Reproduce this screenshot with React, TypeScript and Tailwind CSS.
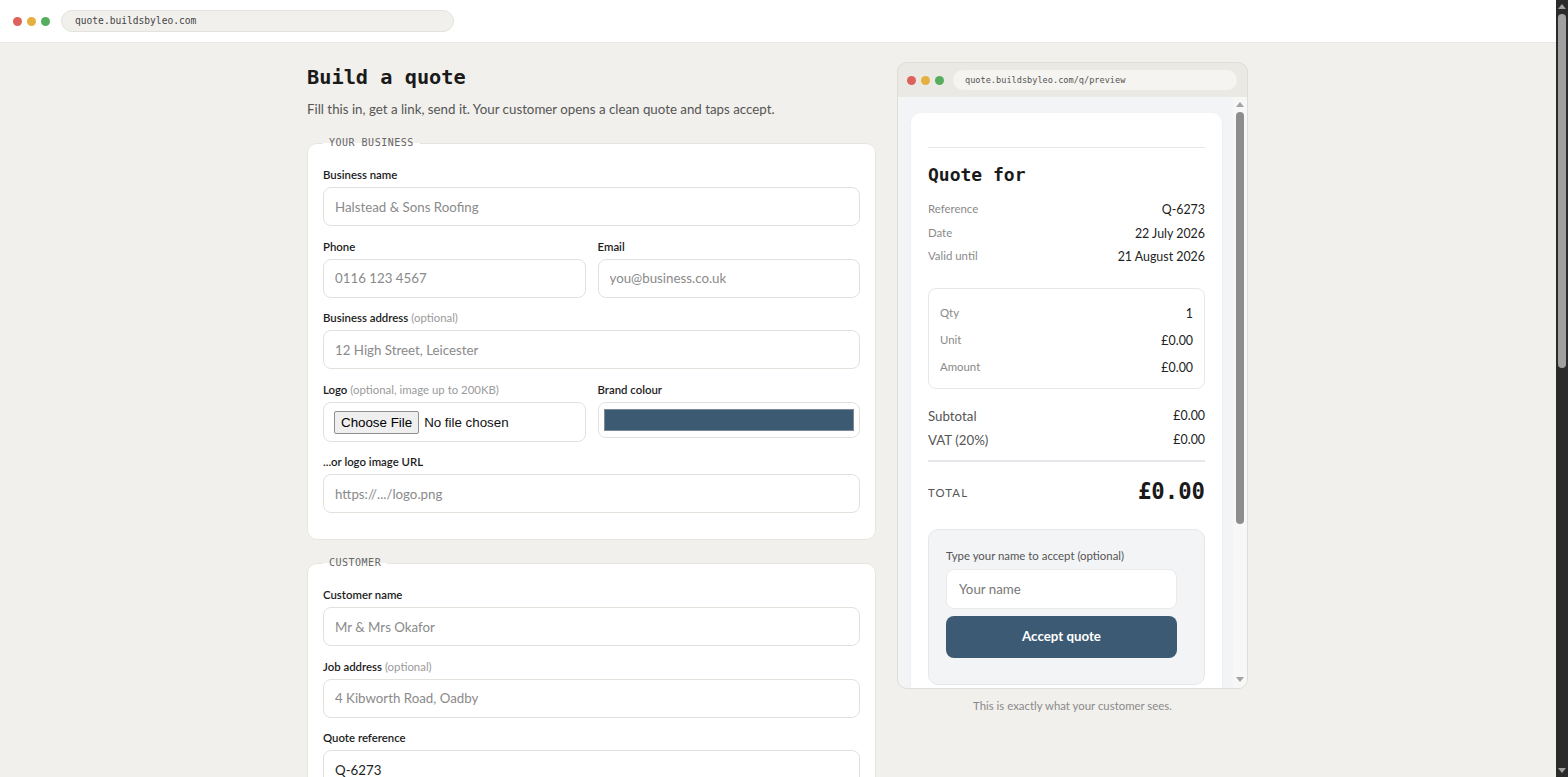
import React from "react";

function Label({ children, optional }: { children: React.ReactNode; optional?: string }) {
  return (
    <label className="block text-[11.4px] leading-[16px] font-semibold text-[#1c1c1c] mb-[4px]">
      {children}
      {optional && <span className="font-normal text-[#9a9a9a]"> {optional}</span>}
    </label>
  );
}

function TextInput({ placeholder, value }: { placeholder?: string; value?: string }) {
  return (
    <input
      className="block w-full h-[39px] rounded-[8px] border border-[#e3e1db] bg-white px-[11px] text-[13.3px] text-[#222] placeholder:text-[#8a8a8a] outline-none"
      placeholder={placeholder}
      defaultValue={value}
    />
  );
}

function Field({ label, optional, placeholder, value }: { label: string; optional?: string; placeholder?: string; value?: string }) {
  return (
    <div>
      <Label optional={optional}>{label}</Label>
      <TextInput placeholder={placeholder} value={value} />
    </div>
  );
}

function Card({ legend, children, className = "" }: { legend: string; children: React.ReactNode; className?: string }) {
  return (
    <fieldset className={`rounded-[10px] border border-[#e6e4de] bg-white px-[15px] pt-[17px] pb-[26px] ${className}`}>
      <legend className="px-[6px] font-['DejaVu_Sans_Mono',monospace] text-[10px] leading-[14px] tracking-[0.5px] text-[#666]">{legend}</legend>
      <div className="flex flex-col gap-[12.5px]">{children}</div>
    </fieldset>
  );
}

function Dots() {
  return (
    <div className="flex items-center gap-[5px]">
      <span className="w-[9px] h-[9px] rounded-full bg-[#dc625b]" />
      <span className="w-[9px] h-[9px] rounded-full bg-[#e6b03f]" />
      <span className="w-[9px] h-[9px] rounded-full bg-[#56ad5d]" />
    </div>
  );
}

function Arrow({ down, color }: { down?: boolean; color: string }) {
  return (
    <svg width="8" height="5" viewBox="0 0 8 5" className="shrink-0">
      <path d={down ? "M0 0 H8 L4 5 Z" : "M0 5 H8 L4 0 Z"} fill={color} />
    </svg>
  );
}

function MetaRow({ label, value }: { label: string; value: string }) {
  return (
    <div className="flex justify-between items-center leading-[20px]">
      <span className="text-[11.4px] text-[#8a8a8a] -mt-[2px]">{label}</span>
      <span className="text-[12.4px] text-[#222]">{value}</span>
    </div>
  );
}

export default function App() {
  return (
    <div className="flex h-[777px] bg-[#f1f0ec] font-['Lato',sans-serif] text-[#1f1f1f]">
      <div className="flex-1 min-w-0 h-full overflow-y-auto [scrollbar-width:none]">
        {/* top bar */}
        <div className="h-[43px] bg-white border-b border-[#e9e7e1] flex items-center pl-[13px]">
          <Dots />
          <div className="ml-[11px] w-[393px] h-[22px] rounded-full bg-[#f1f0ec] border border-[#e4e2dc] flex items-center pl-[13px] font-['DejaVu_Sans_Mono',monospace] text-[9.6px] text-[#444]">
            quote.buildsbyleo.com
          </div>
        </div>

        <main className="w-[942px] mx-auto pt-[20px] pb-[90px] grid grid-cols-[569px_351px] gap-x-[21px] items-start">
          {/* left column */}
          <div>
            <h1 className="font-['DejaVu_Sans_Mono',monospace] font-bold text-[20.3px] leading-[28px] text-[#1a1a1a]">Build a quote</h1>
            <p className="mt-[8px] text-[13.3px] leading-[20px] text-[#555]">
              Fill this in, get a link, send it. Your customer opens a clean quote and taps accept.
            </p>

            <Card legend="YOUR BUSINESS" className="mt-[17px]">
              <Field label="Business name" placeholder="Halstead & Sons Roofing" />
              <div className="grid grid-cols-2 gap-x-[12px]">
                <Field label="Phone" placeholder="0116 123 4567" />
                <Field label="Email" placeholder="you@business.co.uk" />
              </div>
              <Field label="Business address" optional="(optional)" placeholder="12 High Street, Leicester" />
              <div className="grid grid-cols-2 gap-x-[12px]">
                <div>
                  <Label optional="(optional, image up to 200KB)">Logo</Label>
                  <input
                    type="file"
                    className="block w-full h-[40px] rounded-[8px] border border-[#e3e1db] bg-white px-[10px] py-[8px] font-['Liberation_Sans',Arial,sans-serif] text-[13.33px] text-[#111] file:mr-[5px] file:rounded-[2px] file:border file:border-solid file:border-[#8f8f8f] file:bg-[#efefef] file:px-[6px] file:py-[1px] file:text-[#000] file:font-['Liberation_Sans',Arial,sans-serif] file:text-[13.33px]"
                  />
                </div>
                <div>
                  <Label>Brand colour</Label>
                  <div className="h-[36px] rounded-[8px] border border-[#e3e1db] bg-white px-[5px] py-[6px]">
                    <div className="h-full border border-[#7d8a96] bg-[#3d5a73]" />
                  </div>
                </div>
              </div>
              <Field label="...or logo image URL" placeholder="https://.../logo.png" />
            </Card>

            <Card legend="CUSTOMER" className="mt-[16px]">
              <Field label="Customer name" placeholder="Mr & Mrs Okafor" />
              <Field label="Job address" optional="(optional)" placeholder="4 Kibworth Road, Oadby" />
              <Field label="Quote reference" value="Q-6273" />
              <div className="grid grid-cols-2 gap-x-[12px]">
                <Field label="Quote date" value="22/07/2026" />
                <Field label="Valid for (days)" value="30" />
              </div>
            </Card>

            <Card legend="THE WORK" className="mt-[17px]">
              <div>
                <Label>Description</Label>
                <textarea
                  className="block w-full h-[80px] rounded-[8px] border border-[#e3e1db] bg-white px-[11px] py-[9px] text-[13.3px] placeholder:text-[#8a8a8a] outline-none resize-none"
                  placeholder="Strip and re-felt rear roof slope, replace damaged tiles"
                />
              </div>
              <div className="grid grid-cols-2 gap-x-[12px]">
                <Field label="Quantity" value="1" />
                <Field label="Unit price (£)" placeholder="0.00" />
              </div>
              <label className="flex items-center gap-[8px] text-[12.4px] text-[#333]">
                <input type="checkbox" defaultChecked className="w-[14px] h-[14px]" />
                Add VAT (20%)
              </label>
            </Card>

            <Card legend="NOTES" className="mt-[17px]">
              <div>
                <Label optional="(optional)">Notes for the customer</Label>
                <textarea
                  className="block w-full h-[80px] rounded-[8px] border border-[#e3e1db] bg-white px-[11px] py-[9px] text-[13.3px] placeholder:text-[#8a8a8a] outline-none resize-none"
                  placeholder="Scaffolding included. 50% deposit on acceptance."
                />
              </div>
            </Card>

            <button className="mt-[20px] w-full h-[46px] rounded-[8px] bg-[#1f1f1f] text-white text-[13.3px] font-bold">
              Create quote link
            </button>
          </div>

          {/* right column */}
          <div className="-mt-[1px]">
            <div className="rounded-[10px] border border-[#dfddd7] bg-[#ebe9e4] overflow-hidden">
              <div className="h-[34px] flex items-center pl-[9px] pr-[10px]">
                <Dots />
                <div className="ml-[9px] flex-1 h-[20px] rounded-full bg-[#f5f4f0] flex items-center pl-[12px] font-['DejaVu_Sans_Mono',monospace] text-[8.6px] text-[#555]">
                  quote.buildsbyleo.com/q/preview
                </div>
              </div>
              <div className="h-[591px] flex bg-[#f3f4f6]">
                <div className="flex-1 min-w-0 overflow-hidden pl-[13px] pr-[11px] pt-[16px]">
                  <div className="min-h-[788px] rounded-[10px] bg-white shadow-[0_1px_3px_rgba(0,0,0,0.05)] px-[17px] pt-[34px] pb-[17px]">
                    <div className="border-t border-[#e5e7eb]" />
                    <h2 className="mt-[15px] font-['DejaVu_Sans_Mono',monospace] font-bold text-[18px] leading-[24px] text-[#1a1a1a]">Quote for</h2>
                    <div className="mt-[13px] flex flex-col gap-[3.5px]">
                      <MetaRow label="Reference" value="Q-6273" />
                      <MetaRow label="Date" value="22 July 2026" />
                      <MetaRow label="Valid until" value="21 August 2026" />
                    </div>

                    <div className="mt-[21px] rounded-[8px] border border-[#e5e7eb] px-[11px] pt-[15px] pb-[10px] flex flex-col gap-[7px]">
                      <MetaRow label="Qty" value="1" />
                      <MetaRow label="Unit" value="£0.00" />
                      <MetaRow label="Amount" value="£0.00" />
                    </div>

                    <div className="mt-[17px] flex flex-col gap-[4px]">
                      <div className="flex justify-between items-center leading-[20px]">
                        <span className="text-[13.3px] text-[#555]">Subtotal</span>
                        <span className="text-[12.4px] text-[#222]">£0.00</span>
                      </div>
                      <div className="flex justify-between items-center leading-[20px]">
                        <span className="text-[13.3px] text-[#555]">VAT (20%)</span>
                        <span className="text-[12.4px] text-[#222]">£0.00</span>
                      </div>
                    </div>
                    <div className="mt-[10px] border-t-2 border-[#e5e7eb]" />
                    <div className="mt-[14px] flex justify-between items-center">
                      <span className="text-[11.4px] tracking-[1.1px] text-[#555] mt-[4px]">TOTAL</span>
                      <span className="font-['DejaVu_Sans_Mono',monospace] font-bold text-[22.3px] leading-[30px] text-[#1a1a1a]">£0.00</span>
                    </div>

                    <div className="mt-[23px] rounded-[10px] border border-[#e5e7eb] bg-[#f3f4f6] pl-[17px] pt-[18px] pb-[26px]">
                      <label className="block text-[11.4px] leading-[16px] text-[#555] mb-[5px]">Type your name to accept (optional)</label>
                      <input
                        className="block w-[231px] h-[40px] rounded-[8px] border border-[#eceae6] bg-white px-[12px] text-[13.3px] placeholder:text-[#777] outline-none"
                        placeholder="Your name"
                      />
                      <button className="mt-[7px] w-[231px] h-[42px] rounded-[8px] bg-[#3c5a73] text-white text-[13.3px] font-bold">
                        Accept quote
                      </button>
                    </div>
                  </div>
                </div>
                {/* preview scrollbar */}
                <div className="w-[14px] shrink-0 bg-[#f7f7f7] flex flex-col items-center pt-[5px] pb-[6px]">
                  <Arrow color="#a3a3a3" />
                  <div className="mt-[5px] w-[8px] h-[412px] rounded-full bg-[#8d8d8d]" />
                  <div className="flex-1" />
                  <Arrow down color="#a3a3a3" />
                </div>
              </div>
            </div>
            <p className="mt-[9px] text-center text-[11.4px] leading-[16px] text-[#8a8a8a]">This is exactly what your customer sees.</p>
          </div>
        </main>
      </div>

      {/* page scrollbar */}
      <div className="w-[12px] shrink-0 h-full bg-[#2b2b2b] flex flex-col items-center pt-[4px] pb-[4px]">
        <Arrow color="#a0a0a0" />
        <div className="mt-[5px] w-[8px] h-[354px] rounded-full bg-[#a0a0a0]" />
        <div className="flex-1" />
        <Arrow down color="#a0a0a0" />
      </div>
    </div>
  );
}
